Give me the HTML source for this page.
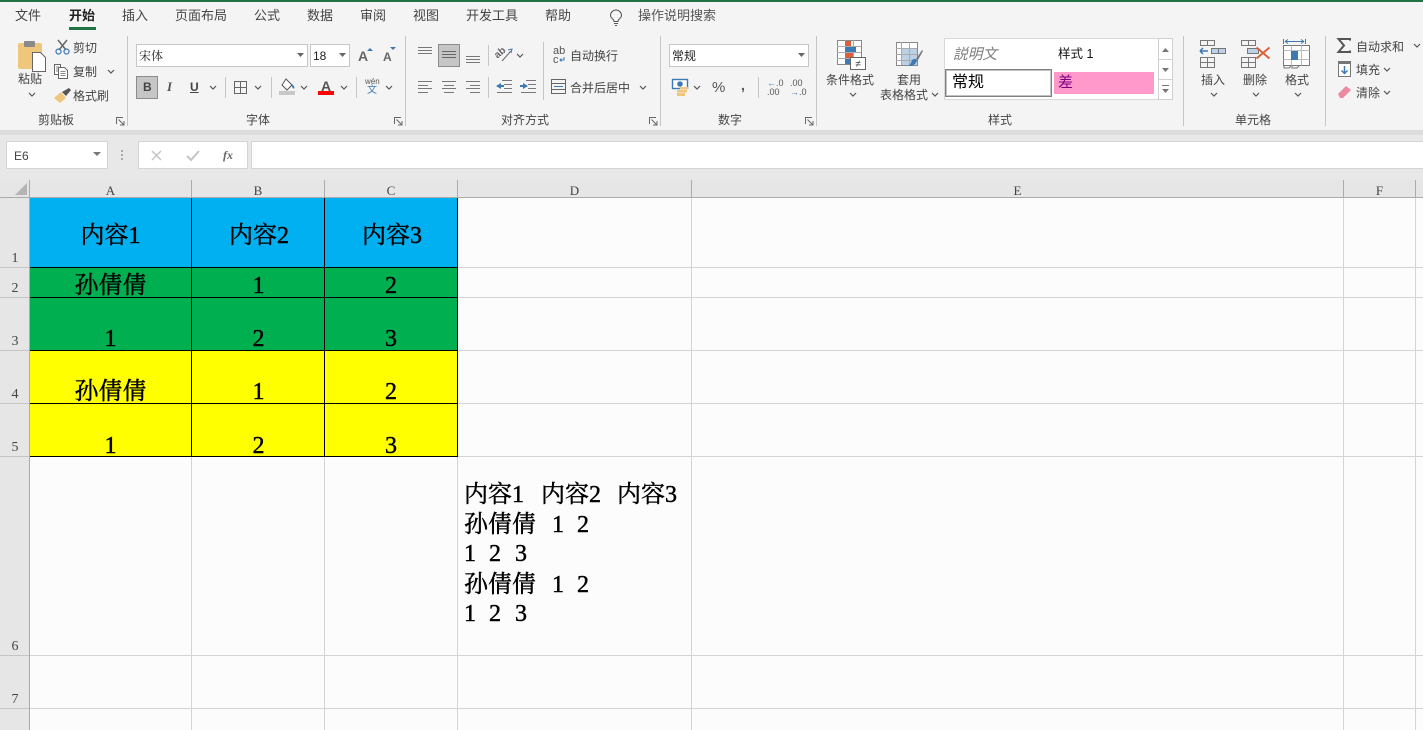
<!DOCTYPE html>
<html lang="zh"><head><meta charset="utf-8"><style>
html,body{margin:0;padding:0;width:1423px;height:730px;overflow:hidden;background:#fcfcfc}
body{position:relative;font-family:"Liberation Sans","Noto Sans CJK SC",sans-serif;color:#444;font-size:12px}
.a{position:absolute}
.t{position:absolute;white-space:nowrap;line-height:16px;height:16px}
.tab{font-size:13px;top:8px;color:#444}
.vs{position:absolute;width:1px;background:#c6c6c6}
.box{position:absolute;background:#fff;border:1px solid #c6c6c6;box-sizing:border-box}
.cell{position:absolute;font-family:"Liberation Serif","Noto Serif CJK SC",serif;font-size:24px;color:#000;text-align:center;line-height:28px;white-space:nowrap;-webkit-text-stroke:.45px #000}
.d{text-align:left;line-height:30px}
.hd{position:absolute;font-family:"Liberation Serif","Noto Serif CJK SC",serif;font-size:13px;color:#444;text-align:center;line-height:14px}
.rn{position:absolute;left:0;width:30px;text-align:center;font-family:"Liberation Serif",serif;font-size:14px;color:#444;line-height:16px}
svg{position:absolute;overflow:visible}
.ln{position:absolute;background:#d4d4d4}
.bk{position:absolute;background:#000}
</style></head><body>
<!-- ribbon bg -->
<div class="a" style="left:0;top:0;width:1423px;height:130px;background:#f4f4f4"></div>
<div class="a" style="left:0;top:0;width:1423px;height:2px;background:#217346"></div>
<div class="a" style="left:0;top:130px;width:1423px;height:50px;background:#e8e8e8"></div>
<div class="a" style="left:0;top:130px;width:1423px;height:5px;background:#dcdcdc"></div>
<div class="t tab" style="left:15px">文件</div>
<div class="t tab" style="left:69px;font-weight:bold;color:#222">开始</div>
<div class="a" style="left:69px;top:27px;width:27px;height:3px;background:#217346"></div>
<div class="t tab" style="left:122px">插入</div>
<div class="t tab" style="left:175px">页面布局</div>
<div class="t tab" style="left:254px">公式</div>
<div class="t tab" style="left:307px">数据</div>
<div class="t tab" style="left:360px">审阅</div>
<div class="t tab" style="left:413px">视图</div>
<div class="t tab" style="left:466px">开发工具</div>
<div class="t tab" style="left:545px">帮助</div>
<svg style="left:610px;top:10px" width="13" height="17" fill="none" stroke="#555"><path d="M4 11.500C4 9 .5 8 .5 5.500a5.500 5.500 0 0 1 11 0C11.500 8 8 9 8 11.500zM4 13.500h4M5 15.500h2"/></svg>
<div class="t tab" style="left:638px;color:#555">操作说明搜索</div>

<!-- group separators -->
<div class="vs" style="left:127px;top:36px;height:90px"></div>
<div class="vs" style="left:405px;top:36px;height:90px"></div>
<div class="vs" style="left:660px;top:36px;height:90px"></div>
<div class="vs" style="left:816px;top:36px;height:90px"></div>
<div class="vs" style="left:1183px;top:36px;height:90px"></div>
<div class="vs" style="left:1325px;top:36px;height:90px"></div>

<!-- clipboard -->
<svg style="left:17px;top:40px" width="30" height="32"><rect x="1" y="3" width="24" height="26" rx="2" fill="#eec67c"/><rect x="7" y="1" width="11" height="6" rx="1" fill="#8a8a8a"/><path d="M15.500 12.500h8l5 5v14h-13z" fill="#fff" stroke="#666"/></svg>
<div class="t" style="left:18px;top:71px;color:#444">粘贴</div>
<svg style="left:28px;top:92px" width="8" height="6" fill="none" stroke="#555" stroke-width="1.200"><path d="M1 1l3 3 3-3"/></svg>
<svg style="left:55px;top:39px" width="15" height="16" fill="none"><path d="M3 1l8 10M12 1L4 11" stroke="#666" stroke-width="1.500"/><circle cx="3.500" cy="12.500" r="2.500" stroke="#3d7ab5" stroke-width="1.200"/><circle cx="11.500" cy="12.500" r="2.500" stroke="#3d7ab5" stroke-width="1.200"/></svg>
<div class="t" style="left:73px;top:40px">剪切</div>
<svg style="left:54px;top:64px" width="15" height="15" fill="#fff" stroke="#666"><path d="M.5.500h6v10h-6z"/><path d="M4.500 3.500h6l3 3v8h-9z"/><path d="M6.500 7.500h5M6.500 9.500h5M6.500 11.500h5M2 3h3M2 5h2M2 7h2" stroke-width=".8"/></svg>
<div class="t" style="left:73px;top:64px">复制</div>
<svg style="left:107px;top:69px" width="8" height="6" fill="none" stroke="#555" stroke-width="1.200"><path d="M1 1l3 3 3-3"/></svg>
<svg style="left:54px;top:88px" width="17" height="16"><path d="M0 10l7-6 5 6-6 5z" fill="#eec67c"/><path d="M8 4l7-4 2 2-5 6z" fill="#555"/></svg>
<div class="t" style="left:73px;top:88px">格式刷</div>
<div class="t" style="left:38px;top:112px">剪贴板</div>
<svg style="left:116px;top:117px" width="9" height="9" fill="none" stroke="#666"><path d="M.5 7V.500H7M2.500 2.500l5 5M8 4v4H4"/></svg>

<!-- font -->
<div class="box" style="left:136px;top:44px;width:172px;height:23px"></div>
<div class="t" style="left:139px;top:48px;color:#222;font-family:'Liberation Sans','Noto Serif CJK SC',serif">宋体</div>
<svg style="left:297px;top:53px" width="8" height="5"><path d="M0 0h7L3.500 4z" fill="#666"/></svg>
<div class="box" style="left:310px;top:44px;width:40px;height:23px"></div>
<div class="t" style="left:313px;top:48px;color:#222">18</div>
<svg style="left:339px;top:53px" width="8" height="5"><path d="M0 0h7L3.500 4z" fill="#666"/></svg>
<div class="t" style="left:358px;top:48px;font-size:14px;font-weight:bold;color:#666">A</div>
<svg style="left:367px;top:47px" width="6" height="4"><path d="M0 4l3-3 3 3z" fill="#3d7ab5"/></svg>
<div class="t" style="left:383px;top:49px;font-size:12px;font-weight:bold;color:#666">A</div>
<svg style="left:390px;top:47px" width="6" height="4"><path d="M0 0h6L3 3z" fill="#3d7ab5"/></svg>
<div class="a" style="left:136px;top:76px;width:22px;height:23px;background:#c6c6c6;border:1px solid #8c8c8c;box-sizing:border-box"></div>
<div class="t" style="left:143px;top:79px;font-weight:bold;color:#444">B</div>
<div class="t" style="left:167px;top:79px;font-style:italic;font-family:'Liberation Serif',serif;font-weight:bold;font-size:13px;color:#555">I</div>
<div class="t" style="left:190px;top:79px;font-weight:bold;color:#444;text-decoration:underline">U</div>
<svg style="left:209px;top:85px" width="8" height="6" fill="none" stroke="#555" stroke-width="1.200"><path d="M1 1l3 3 3-3"/></svg>
<div class="vs" style="left:225px;top:77px;height:21px"></div>
<svg style="left:234px;top:81px" width="13" height="13" fill="none" stroke="#666"><path d="M.5.500h12v12H.500zM6.500.500v12M.5 6.500h12"/></svg>
<svg style="left:254px;top:85px" width="8" height="6" fill="none" stroke="#555" stroke-width="1.200"><path d="M1 1l3 3 3-3"/></svg>
<div class="vs" style="left:271px;top:77px;height:21px"></div>
<svg style="left:279px;top:78px" width="17" height="18"><path d="M7 1l6 6-5 5-5-5z" fill="#fff" stroke="#555"/><path d="M13 6c2 2 3 3 2 5l-2-2z" fill="#3d7ab5"/><rect x="0" y="13" width="16" height="4" fill="#c8c8c8"/></svg>
<svg style="left:300px;top:85px" width="8" height="6" fill="none" stroke="#555" stroke-width="1.200"><path d="M1 1l3 3 3-3"/></svg>
<div class="t" style="left:321px;top:78px;font-weight:bold;font-size:14px;color:#555">A</div>
<div class="a" style="left:318px;top:91px;width:16px;height:4px;background:#f00"></div>
<svg style="left:340px;top:85px" width="8" height="6" fill="none" stroke="#555" stroke-width="1.200"><path d="M1 1l3 3 3-3"/></svg>
<div class="vs" style="left:356px;top:77px;height:21px"></div>
<div class="t" style="left:365px;top:77px;font-size:8px;line-height:10px;color:#555">wén</div>
<div class="t" style="left:367px;top:85px;font-size:10px;line-height:12px;color:#3d7ab5">文</div>
<svg style="left:385px;top:85px" width="8" height="6" fill="none" stroke="#555" stroke-width="1.200"><path d="M1 1l3 3 3-3"/></svg>
<div class="t" style="left:246px;top:112px">字体</div>
<svg style="left:394px;top:117px" width="9" height="9" fill="none" stroke="#666"><path d="M.5 7V.500H7M2.500 2.500l5 5M8 4v4H4"/></svg>

<!-- alignment -->
<svg style="left:418px;top:47px" width="15" height="8" stroke="#777"><path d="M0 .500h14M0 3.500h14M0 6.500h14"/></svg>
<div class="a" style="left:438px;top:44px;width:22px;height:23px;background:#c6c6c6;border:1px solid #8c8c8c;box-sizing:border-box"></div>
<svg style="left:442px;top:51px" width="15" height="8" stroke="#666"><path d="M0 .500h14M0 3.500h14M0 6.500h14"/></svg>
<svg style="left:466px;top:56px" width="15" height="8" stroke="#777"><path d="M0 .500h14M0 3.500h14M0 6.500h14"/></svg>
<div class="vs" style="left:488px;top:45px;height:21px"></div>
<div class="t" style="left:496px;top:47px;font-size:10px;line-height:12px;font-weight:bold;color:#666;transform:rotate(-40deg)">ab</div>
<svg style="left:497px;top:47px" width="18" height="16" fill="none" stroke="#666"><path d="M5 14l9-10"/><path d="M11 3l4-1-1 4" stroke="#3d7ab5"/></svg>
<svg style="left:516px;top:53px" width="8" height="6" fill="none" stroke="#555" stroke-width="1.200"><path d="M1 1l3 3 3-3"/></svg>
<div class="vs" style="left:543px;top:42px;height:58px"></div>
<div class="t" style="left:553px;top:47px;font-size:11px;line-height:9px;color:#555;width:12px;height:20px">ab<br>c</div>
<svg style="left:559px;top:57px" width="6" height="5" fill="none" stroke="#3d7ab5"><path d="M5 0v3H1M2.500 1.500L1 3l1.500 1.500"/></svg>
<div class="t" style="left:570px;top:48px">自动换行</div>
<svg style="left:418px;top:81px" width="15" height="12" stroke="#777"><path d="M0 .500h14M0 4.500h10M0 7.500h14M0 11.500h10"/></svg>
<svg style="left:442px;top:81px" width="15" height="12" stroke="#777"><path d="M0 .500h14M2 4.500h10M0 7.500h14M2 11.500h10"/></svg>
<svg style="left:466px;top:81px" width="15" height="12" stroke="#777"><path d="M0 .500h14M4 4.500h10M0 7.500h14M4 11.500h10"/></svg>
<div class="vs" style="left:488px;top:77px;height:21px"></div>
<svg style="left:496px;top:80px" width="17" height="13"><path d="M6 .500h10M8 4.500h8M8 8.500h8M1 12.500h15" stroke="#777" fill="none"/><path d="M0 6l5-3v2h3v2H5v2z" fill="#3d7ab5"/></svg>
<svg style="left:520px;top:80px" width="17" height="13"><path d="M6 .500h10M8 4.500h8M8 8.500h8M1 12.500h15" stroke="#777" fill="none"/><path d="M8 6L3 3v2H0v2h3v2z" fill="#3d7ab5"/></svg>
<svg style="left:551px;top:79px" width="16" height="15" fill="none" stroke="#666"><path d="M.5.500h14v14H.500zM.5 4.500h14M.5 10.500h14"/><path d="M3 7.500h9" stroke="#3d7ab5"/></svg>
<div class="t" style="left:570px;top:80px">合并后居中</div>
<svg style="left:639px;top:85px" width="8" height="6" fill="none" stroke="#555" stroke-width="1.200"><path d="M1 1l3 3 3-3"/></svg>
<div class="t" style="left:501px;top:112px">对齐方式</div>
<svg style="left:649px;top:117px" width="9" height="9" fill="none" stroke="#666"><path d="M.5 7V.500H7M2.500 2.500l5 5M8 4v4H4"/></svg>

<!-- number -->
<div class="box" style="left:669px;top:44px;width:140px;height:23px"></div>
<div class="t" style="left:672px;top:48px;color:#222">常规</div>
<svg style="left:798px;top:53px" width="8" height="5"><path d="M0 0h7L3.500 4z" fill="#666"/></svg>
<svg style="left:672px;top:79px" width="17" height="17"><rect x=".5" y=".5" width="15" height="9" fill="#fff" stroke="#3d7ab5" stroke-width="1.400"/><circle cx="8" cy="5" r="2.800" fill="#3d7ab5"/><rect x="8" y="8" width="8" height="2.500" fill="#eec67c"/><rect x="5" y="11" width="10" height="2.500" fill="#eec67c"/><rect x="5" y="14" width="8" height="3" fill="#eec67c"/></svg>
<svg style="left:693px;top:85px" width="8" height="6" fill="none" stroke="#555" stroke-width="1.200"><path d="M1 1l3 3 3-3"/></svg>
<div class="t" style="left:712px;top:80px;font-size:15px;color:#555">%</div>
<div class="t" style="left:741px;top:77px;font-size:14px;font-weight:bold;color:#555">,</div>
<div class="vs" style="left:758px;top:77px;height:21px"></div>
<div class="t" style="left:767px;top:79px;font-size:9px;line-height:9px;color:#555"><span style="color:#3d7ab5">←</span>.0<br>.00</div>
<div class="t" style="left:790px;top:79px;font-size:9px;line-height:9px;color:#555">.00<br><span style="color:#3d7ab5">→</span>.0</div>
<div class="t" style="left:718px;top:112px">数字</div>
<svg style="left:805px;top:117px" width="9" height="9" fill="none" stroke="#666"><path d="M.5 7V.500H7M2.500 2.500l5 5M8 4v4H4"/></svg>

<!-- cond format -->
<svg style="left:837px;top:40px" width="30" height="30"><rect x=".5" y=".5" width="24" height="24" fill="#fff" stroke="#888"/><path d="M0 6.500h24M0 12.500h24M0 18.500h24M8.500 0v24M16.500 0v24" stroke="#aaa"/><rect x="8" y="1" width="6" height="5" fill="#d9603b"/><rect x="8" y="7" width="11" height="5" fill="#3d7ab5"/><rect x="8" y="13" width="8" height="5" fill="#d9603b"/><rect x="8" y="19" width="5" height="5" fill="#3d7ab5"/><rect x="13.500" y="17.500" width="15" height="12" fill="#fff" stroke="#666"/><text x="21" y="27" font-size="10" text-anchor="middle" fill="#444" font-family="Liberation Sans">≠</text></svg>
<div class="t" style="left:826px;top:72px">条件格式</div>
<svg style="left:849px;top:92px" width="8" height="6" fill="none" stroke="#555" stroke-width="1.200"><path d="M1 1l3 3 3-3"/></svg>
<svg style="left:896px;top:42px" width="30" height="29"><rect x=".5" y=".5" width="21" height="23" fill="#fff" stroke="#888"/><rect x="5" y="6" width="16" height="17" fill="#bcd0e6"/><path d="M0 6.500h21M0 12.500h21M0 18.500h21M5.500 0v23M13.500 0v23" stroke="#aaa"/><path d="M20 17l6-9 1 1-5 9z" fill="#777"/><path d="M16 18c3-2 5-1 5 1l-2 3c-2 2-5 2-7 2 2-1 3-3 4-6z" fill="#3d7ab5"/></svg>
<div class="t" style="left:897px;top:72px">套用</div>
<div class="t" style="left:880px;top:87px">表格格式</div>
<svg style="left:931px;top:92px" width="8" height="6" fill="none" stroke="#555" stroke-width="1.200"><path d="M1 1l3 3 3-3"/></svg>

<!-- styles gallery -->
<div class="a" style="left:944px;top:38px;width:229px;height:62px;background:#fff;border:1px solid #d8d8d8;box-sizing:border-box"></div>
<div class="t" style="left:953px;top:47px;font-size:14.700px;font-style:italic;color:#7f7f7f">説明文</div>
<div class="t" style="left:1058px;top:46px;font-size:12.500px;color:#111">样式 1</div>
<div class="a" style="left:945px;top:69px;width:107px;height:28px;background:#fff;border:2px solid #c2c2c2;outline:1px solid #808080;outline-offset:-1px;box-sizing:border-box"></div>
<div class="t" style="left:952px;top:75px;font-size:16px;color:#000">常规</div>
<div class="a" style="left:1054px;top:72px;width:100px;height:22px;background:#ff99cc"></div>
<div class="t" style="left:1058px;top:75px;font-size:15px;color:#800080">差</div>
<div class="a" style="left:1158px;top:38px;width:15px;height:62px;background:#fff;border:1px solid #d0d0d0;box-sizing:border-box"></div>
<div class="a" style="left:1158px;top:59px;width:15px;height:1px;background:#d0d0d0"></div>
<div class="a" style="left:1158px;top:79px;width:15px;height:1px;background:#d0d0d0"></div>
<svg style="left:1162px;top:48px" width="8" height="5"><path d="M0 4l3.500-4L7 4z" fill="#777"/></svg>
<svg style="left:1162px;top:68px" width="8" height="5"><path d="M0 0h7L3.500 4z" fill="#777"/></svg>
<svg style="left:1162px;top:85px" width="8" height="10"><path d="M0 .500h7" stroke="#777"/><path d="M0 4h7L3.500 8z" fill="#777"/></svg>
<div class="t" style="left:988px;top:112px">样式</div>

<!-- cells group -->
<svg style="left:1200px;top:40px" width="27" height="28" fill="none" stroke="#777"><path d="M.5.500h14v5H.500zM7.500.500v5M.5 17.500h14v10H.500zM7.500 17.500v10M.5 22.500h14"/><path d="M11.500 8.500h14v5h-14zM18.500 8.500v5" fill="#bcd0e6" stroke="#777"/><path d="M0 11h8M0 11l3-3M0 11l3 3" stroke="#3d7ab5" stroke-width="1.500"/></svg>
<div class="t" style="left:1201px;top:72px">插入</div>
<svg style="left:1210px;top:92px" width="8" height="6" fill="none" stroke="#555" stroke-width="1.200"><path d="M1 1l3 3 3-3"/></svg>
<svg style="left:1241px;top:40px" width="30" height="28" fill="none" stroke="#777"><path d="M.5.500h14v5H.500zM7.500.500v5M.5 17.500h14v10H.500zM7.500 17.500v10M.5 22.500h14"/><path d="M6.500 8.500h11v5h-11z" fill="#bcd0e6"/><path d="M15.500 7.500l13 11M28.500 7.500l-13 11" stroke="#d9603b" stroke-width="2"/></svg>
<div class="t" style="left:1243px;top:72px">删除</div>
<svg style="left:1252px;top:92px" width="8" height="6" fill="none" stroke="#555" stroke-width="1.200"><path d="M1 1l3 3 3-3"/></svg>
<svg style="left:1283px;top:39px" width="28" height="32" fill="none"><path d="M.5 0v5M22.500 0v5" stroke="#3d7ab5"/><path d="M2 2.500h19M2 2.500l3-2M2 2.500l3 2M21 2.500l-3-2M21 2.500l-3 2" stroke="#3d7ab5"/><rect x=".5" y="6.500" width="26" height="20" fill="#fff" stroke="#777"/><path d="M.5 11.500h26M8.500 6.500v20M18.500 6.500v20M.5 20.500h26" stroke="#bbb"/><rect x="8" y="12" width="7" height="9" fill="#3d7ab5"/><path d="M1 27v2h5l2-2M9 27v2h5l2-2" stroke="#777"/></svg>
<div class="t" style="left:1285px;top:72px">格式</div>
<svg style="left:1294px;top:92px" width="8" height="6" fill="none" stroke="#555" stroke-width="1.200"><path d="M1 1l3 3 3-3"/></svg>
<div class="t" style="left:1235px;top:112px">单元格</div>

<!-- editing -->
<svg style="left:1337px;top:38px" width="15" height="15" fill="none" stroke="#555" stroke-width="2"><path d="M13 2.500V1H1.500L7 7.500 1.500 14H13v-1.500"/></svg>
<div class="t" style="left:1356px;top:39px">自动求和</div>
<svg style="left:1413px;top:43px" width="8" height="6" fill="none" stroke="#555" stroke-width="1.200"><path d="M1 1l3 3 3-3"/></svg>
<svg style="left:1338px;top:61px" width="14" height="16"><rect x=".5" y=".5" width="12" height="15" fill="#fff" stroke="#777"/><rect x="0" y="0" width="13" height="3" fill="#777"/><path d="M6.500 5v8M3.500 9.500l3 3 3-3" stroke="#3d7ab5" stroke-width="1.500" fill="none"/></svg>
<div class="t" style="left:1356px;top:62px">填充</div>
<svg style="left:1383px;top:67px" width="8" height="6" fill="none" stroke="#555" stroke-width="1.200"><path d="M1 1l3 3 3-3"/></svg>
<svg style="left:1338px;top:85px" width="14" height="14"><path d="M0 9l8-8 5 4-8 8H2z" fill="#eb8aa0"/></svg>
<div class="t" style="left:1356px;top:85px">清除</div>
<svg style="left:1383px;top:90px" width="8" height="6" fill="none" stroke="#555" stroke-width="1.200"><path d="M1 1l3 3 3-3"/></svg>

<!-- formula bar -->
<div class="box" style="left:6px;top:141px;width:102px;height:28px;border-color:#d4d4d4"></div>
<div class="t" style="left:14px;top:148px;color:#444">E6</div>
<svg style="left:93px;top:152px" width="9" height="5"><path d="M0 0h8L4 4z" fill="#777"/></svg>
<svg style="left:121px;top:150px" width="3" height="12" fill="#aaa"><rect y="0" width="2" height="2"/><rect y="4" width="2" height="2"/><rect y="8" width="2" height="2"/></svg>
<div class="box" style="left:138px;top:141px;width:110px;height:28px;border-color:#d4d4d4"></div>
<svg style="left:151px;top:150px" width="12" height="11" fill="none" stroke="#c4c4c4" stroke-width="1.500"><path d="M1 1l9 9M10 1l-9 9"/></svg>
<svg style="left:186px;top:150px" width="14" height="11" fill="none" stroke="#c4c4c4" stroke-width="2"><path d="M1 6l4 4 8-9"/></svg>
<div class="t" style="left:223px;top:147px;font-family:'Liberation Serif',serif;font-style:italic;font-weight:bold;color:#666;font-size:12px">fx</div>
<div class="box" style="left:251px;top:141px;width:1172px;height:28px;border-color:#d4d4d4;border-right:0"></div>

<!-- header rows -->
<div class="a" style="left:0;top:180px;width:1423px;height:17px;background:#e6e6e6"></div>
<div class="a" style="left:0;top:197px;width:30px;height:533px;background:#e6e6e6"></div>
<div class="a" style="left:0;top:197px;width:1423px;height:1px;background:#ababab"></div>
<div class="a" style="left:29px;top:180px;width:1px;height:550px;background:#ababab"></div>
<svg style="left:15px;top:183px" width="12" height="12"><path d="M12 0v12H0z" fill="#b4b4b4"/></svg>
<div class="ln" style="left:191px;top:180px;width:1px;height:17px;background:#ababab"></div>
<div class="ln" style="left:324px;top:180px;width:1px;height:17px;background:#ababab"></div>
<div class="ln" style="left:457px;top:180px;width:1px;height:17px;background:#ababab"></div>
<div class="ln" style="left:691px;top:180px;width:1px;height:17px;background:#ababab"></div>
<div class="ln" style="left:1343px;top:180px;width:1px;height:17px;background:#ababab"></div>
<div class="ln" style="left:1415px;top:180px;width:1px;height:17px;background:#ababab"></div>
<div class="hd" style="left:30px;top:184px;width:161px">A</div>
<div class="hd" style="left:192px;top:184px;width:132px">B</div>
<div class="hd" style="left:325px;top:184px;width:132px">C</div>
<div class="hd" style="left:458px;top:184px;width:233px">D</div>
<div class="hd" style="left:692px;top:184px;width:651px">E</div>
<div class="hd" style="left:1344px;top:184px;width:71px">F</div>

<div class="rn" style="top:251px">1</div>
<div class="rn" style="top:281px">2</div>
<div class="rn" style="top:334px">3</div>
<div class="rn" style="top:387px">4</div>
<div class="rn" style="top:440px">5</div>
<div class="rn" style="top:639px">6</div>
<div class="rn" style="top:692px">7</div>

<!-- grid lines -->
<div class="ln" style="left:191px;top:456px;width:1px;height:274px"></div>
<div class="ln" style="left:324px;top:456px;width:1px;height:274px"></div>
<div class="ln" style="left:457px;top:198px;width:1px;height:532px"></div>
<div class="ln" style="left:691px;top:198px;width:1px;height:532px"></div>
<div class="ln" style="left:1343px;top:198px;width:1px;height:532px"></div>
<div class="ln" style="left:1415px;top:198px;width:1px;height:532px"></div>
<div class="ln" style="left:458px;top:267px;width:965px;height:1px"></div>
<div class="ln" style="left:458px;top:297px;width:965px;height:1px"></div>
<div class="ln" style="left:458px;top:350px;width:965px;height:1px"></div>
<div class="ln" style="left:458px;top:403px;width:965px;height:1px"></div>
<div class="ln" style="left:458px;top:456px;width:965px;height:1px"></div>
<div class="ln" style="left:30px;top:655px;width:1393px;height:1px"></div>
<div class="ln" style="left:30px;top:708px;width:1393px;height:1px"></div>
<div class="a" style="left:0;top:267px;width:29px;height:1px;background:#c4c4c4"></div>
<div class="a" style="left:0;top:297px;width:29px;height:1px;background:#c4c4c4"></div>
<div class="a" style="left:0;top:350px;width:29px;height:1px;background:#c4c4c4"></div>
<div class="a" style="left:0;top:403px;width:29px;height:1px;background:#c4c4c4"></div>
<div class="a" style="left:0;top:456px;width:29px;height:1px;background:#c4c4c4"></div>
<div class="a" style="left:0;top:655px;width:29px;height:1px;background:#c4c4c4"></div>
<div class="a" style="left:0;top:708px;width:29px;height:1px;background:#c4c4c4"></div>

<!-- coloured table -->
<div class="a" style="left:30px;top:198px;width:428px;height:70px;background:#00b0f0"></div>
<div class="a" style="left:30px;top:267px;width:428px;height:84px;background:#00b050"></div>
<div class="a" style="left:30px;top:350px;width:428px;height:107px;background:#ffff00"></div>
<div class="bk" style="left:30px;top:267px;width:428px;height:1px"></div>
<div class="bk" style="left:30px;top:297px;width:428px;height:1px"></div>
<div class="bk" style="left:30px;top:350px;width:428px;height:1px"></div>
<div class="bk" style="left:30px;top:403px;width:428px;height:1px"></div>
<div class="bk" style="left:30px;top:456px;width:428px;height:1px"></div>
<div class="bk" style="left:191px;top:198px;width:1px;height:259px"></div>
<div class="bk" style="left:324px;top:198px;width:1px;height:259px"></div>
<div class="bk" style="left:457px;top:198px;width:1px;height:259px"></div>

<div class="cell" style="left:30px;top:222px;width:161px">内容1</div>
<div class="cell" style="left:192px;top:222px;width:134px">内容2</div>
<div class="cell" style="left:325px;top:222px;width:134px">内容3</div>
<div class="cell" style="left:30px;top:272px;width:161px">孙倩倩</div>
<div class="cell" style="left:192px;top:272px;width:133px">1</div>
<div class="cell" style="left:325px;top:272px;width:132px">2</div>
<div class="cell" style="left:30px;top:325px;width:161px">1</div>
<div class="cell" style="left:192px;top:325px;width:133px">2</div>
<div class="cell" style="left:325px;top:325px;width:132px">3</div>
<div class="cell" style="left:30px;top:378px;width:161px">孙倩倩</div>
<div class="cell" style="left:192px;top:378px;width:133px">1</div>
<div class="cell" style="left:325px;top:378px;width:132px">2</div>
<div class="cell" style="left:30px;top:432px;width:161px">1</div>
<div class="cell" style="left:192px;top:432px;width:133px">2</div>
<div class="cell" style="left:325px;top:432px;width:132px">3</div>

<!-- D6 text -->
<div class="cell d" style="left:464px;top:480px">内容1</div>
<div class="cell d" style="left:541px;top:480px">内容2</div>
<div class="cell d" style="left:617px;top:480px">内容3</div>
<div class="cell d" style="left:464px;top:510px">孙倩倩</div>
<div class="cell d" style="left:552px;top:510px">1</div>
<div class="cell d" style="left:577px;top:510px">2</div>
<div class="cell d" style="left:464px;top:539px">1</div>
<div class="cell d" style="left:489px;top:539px">2</div>
<div class="cell d" style="left:515px;top:539px">3</div>
<div class="cell d" style="left:464px;top:570px">孙倩倩</div>
<div class="cell d" style="left:552px;top:570px">1</div>
<div class="cell d" style="left:577px;top:570px">2</div>
<div class="cell d" style="left:464px;top:599px">1</div>
<div class="cell d" style="left:489px;top:599px">2</div>
<div class="cell d" style="left:515px;top:599px">3</div>
</body></html>
